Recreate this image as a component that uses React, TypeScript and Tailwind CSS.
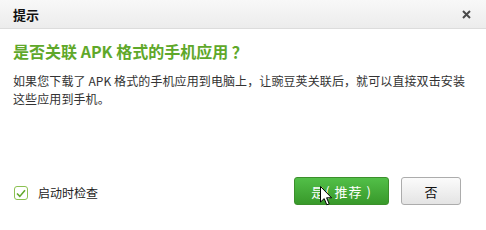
import React from "react";

const FONT = "font-['Noto_Sans_CJK_SC','Liberation_Sans',sans-serif]";

const Cursor = () => (
  <svg
    className="pointer-events-none absolute left-[320px] top-[186px]"
    width="13"
    height="20"
    viewBox="0 0 13 20"
  >
    <path
      d="M0.5 0.5 L0.5 16 L4.2 12.6 L6.8 18.8 L9.2 17.8 L6.6 11.8 L11.6 11.8 Z"
      fill="#fff"
      stroke="#000"
      strokeWidth="1"
      strokeLinejoin="round"
    />
  </svg>
);

export default function App() {
  return (
    <div className={`relative flex h-[230px] w-[486px] flex-col bg-white ${FONT}`}>
      {/* title bar */}
      <div className="flex h-[29px] items-center justify-between border-b border-[#dcdcdc] bg-gradient-to-b from-[#f8f8f8] to-[#ececec] pl-[13px] pr-[15px]">
        <span className="text-[13px] font-bold leading-none text-[#111]">提示</span>
        <svg width="9" height="9" viewBox="0 0 9 9">
          <path d="M1 1 L8 8 M8 1 L1 8" stroke="#4a4a4a" strokeWidth="2" />
        </svg>
      </div>

      <div className="px-[13px] pt-[12px]">
        <h1 className="whitespace-nowrap text-[16px] font-bold leading-[20px] text-[#5fa82a]">
          是否关联 APK 格式的手机应用 ？
        </h1>
        <p className="mt-[11px] whitespace-nowrap text-[12px] leading-[18px] tracking-[0.1px] text-[#333]">
          如果您下载了 APK 格式的手机应用到电脑上，让豌豆荚关联后，就可以直接双击安装
          <br />
          这些应用到手机。
        </p>
      </div>

      <div className="flex-1" />

      {/* footer */}
      <div className="flex items-center pb-[25px] pl-[14px] pr-[25px]">
        <label className="mt-[4px] flex items-center gap-[10px]">
          <span className="flex h-[14px] w-[14px] items-center justify-center rounded-[3px] border border-[#8cc152] bg-white">
            <svg width="10" height="9" viewBox="0 0 10 9">
              <path d="M1 4.5 L3.8 7.4 L9 1.2" fill="none" stroke="#62a82c" strokeWidth="1.6" />
            </svg>
          </span>
          <span className="text-[12px] leading-none text-[#222]">启动时检查</span>
        </label>
        <div className="flex-1" />
        <div className="flex gap-[12px]">
          <button className="h-[28px] w-[95px] rounded-[3px] border border-[#3b8f2b] bg-gradient-to-b from-[#52bf48] to-[#38992a] text-[13px] leading-none tracking-[1px] text-white">
            是( 推荐 )
          </button>
          <button className="h-[28px] w-[60px] rounded-[3px] border border-[#acacac] bg-gradient-to-b from-[#fbfbfb] to-[#e4e4e4] text-[13px] leading-none text-[#111]">
            否
          </button>
        </div>
      </div>

      <Cursor />
    </div>
  );
}
